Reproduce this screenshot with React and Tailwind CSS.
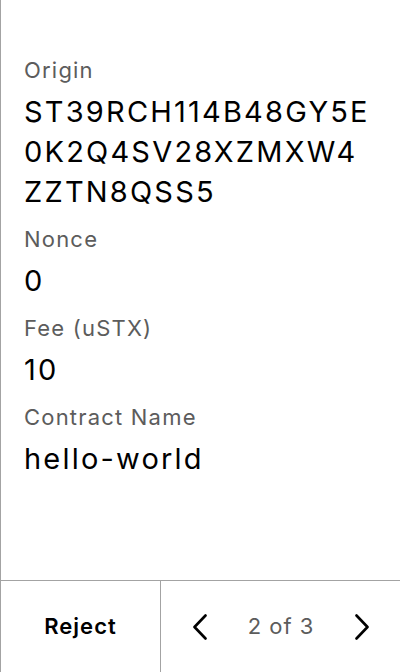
export default function App() {
  const fields = [
    { label: 'Origin', lines: ['ST39RCH114B48GY5E', '0K2Q4SV28XZMXW4', 'ZZTN8QSS5'] },
    { label: 'Nonce', lines: ['0'] },
    { label: 'Fee (uSTX)', lines: ['10'] },
    { label: 'Contract Name', lines: ['hello-world'] },
  ]

  return (
    <div
      className="h-[672px] w-[400px] flex flex-col bg-white border-l border-[#a3a3a3]"
      style={{ fontFamily: 'Inter, "Noto Sans", sans-serif' }}
    >
      <div className="flex-1 pt-[56px] pl-[23px] pr-4">
        {fields.map((f, i) => (
          <div key={f.label} className={i === 0 ? '' : 'mt-[13px]'}>
            <div className="text-[22px] leading-[28px] tracking-[1.2px] text-[#5c5c5c]">{f.label}</div>
            <div className="mt-2 text-[29px] leading-[40px] tracking-[2.2px] text-black whitespace-nowrap">
              {f.lines.map(l => (
                <div key={l}>{l}</div>
              ))}
            </div>
          </div>
        ))}
      </div>

      <div className="h-[92px] flex border-t border-[#a3a3a3]">
        <button className="w-[160px] border-r border-[#a3a3a3] flex items-center justify-center text-[22px] tracking-[1px] font-semibold text-black">
          Reject
        </button>
        <div className="flex-1 flex items-center justify-between pl-[32px] pr-[31px]">
          <svg width="14" height="26" viewBox="0 0 14 26" fill="none" stroke="black" strokeWidth="2.6" strokeLinecap="round" strokeLinejoin="round">
            <polyline points="12.5,1.5 1.5,13 12.5,24.5" />
          </svg>
          <span className="text-[22px] tracking-[1px] text-[#5c5c5c]">2 of 3</span>
          <svg width="14" height="26" viewBox="0 0 14 26" fill="none" stroke="black" strokeWidth="2.6" strokeLinecap="round" strokeLinejoin="round">
            <polyline points="1.5,1.5 12.5,13 1.5,24.5" />
          </svg>
        </div>
      </div>
    </div>
  )
}
